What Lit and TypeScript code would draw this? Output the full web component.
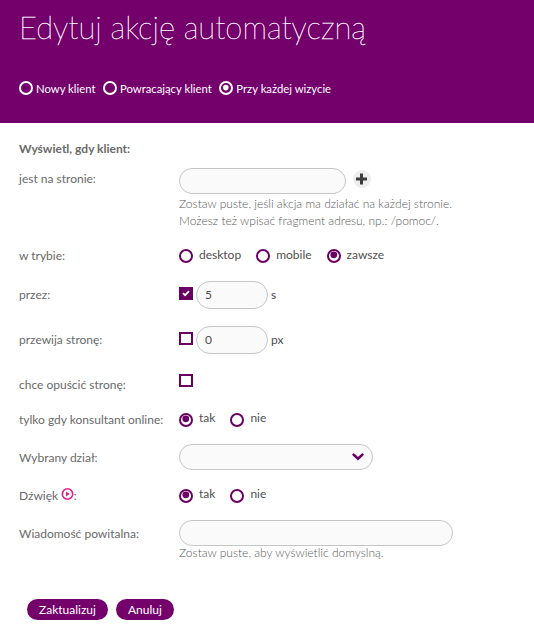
import { LitElement, html, css, nothing } from "lit";
import { customElement, property } from "lit/decorators.js";
import { classMap } from "lit/directives/class-map.js";

@customElement("radio-option")
class RadioOption extends LitElement {
  @property() label = "";
  @property({ type: Boolean }) checked = false;
  @property({ type: Boolean }) light = false;

  static styles = css`
    :host { display: flex; align-items: center; gap: 6px; color: #505050; font-size: 12px; line-height: 20px; }
    :host([light]) { color: #fff; gap: 3px; font-size: 11.3px; }
    .ring { width: 14px; height: 14px; flex: none; display: block; margin-top: var(--ring-drop, 1px); color: #6b0063; }
    .text { margin-top: -1px; white-space: nowrap; }
    :host([light]) .ring { color: #fff; margin-top: -2px; }
    :host([light]) .text { margin-top: 0; }
  `;

  render() {
    return html`
      <svg class="ring" viewBox="0 0 14 14">
        <circle cx="7" cy="7" r="6" fill="none" stroke="currentColor" stroke-width="2" />
        ${this.checked
          ? html`<svg viewBox="0 0 14 14"><circle cx="6.8" cy=${this.light ? 6.6 : 5.8} r=${this.light ? 2.8 : 3.4} fill="currentColor" /></svg>`
          : nothing}
      </svg>
      <span class="text">${this.label}</span>
    `;
  }
}

@customElement("check-box")
class CheckBox extends LitElement {
  @property({ type: Boolean }) checked = false;

  static styles = css`
    :host { display: block; width: 14px; height: 13px; flex: none; }
    .box { box-sizing: border-box; width: 14px; height: 13px; border: 2px solid #6b0063; display: grid; place-items: center; }
    .on { background: #6b0063; }
    .tick { width: 8px; height: 7px; display: block; }
  `;

  render() {
    return html`<div class=${classMap({ box: true, on: this.checked })}>
      ${this.checked
        ? html`<svg class="tick" viewBox="0 0 8 7"><path d="M1 3.2 3.1 5.2 7 1.2" fill="none" stroke="#fff" stroke-width="1.8" /></svg>`
        : nothing}
    </div>`;
  }
}

@customElement("app-root")
class AppRoot extends LitElement {
  static styles = css`
    :host { display: block; height: 630px; background: #fff; color: #6a6a6a; font: 12px/20px Lato, sans-serif; overflow: hidden; }
    .header { box-sizing: border-box; height: 123px; padding: 8px 19px 0; background: #73006b; color: #fff; }
    .title { margin: 0; font-size: 31px; line-height: 38px; font-weight: 200; -webkit-text-stroke: 0.35px #fff; white-space: nowrap; }
    .visits { display: flex; gap: 7.5px; margin-top: 33px; }
    .form { padding: 16px 19px 0; }
    .lead { margin: 0; font-size: 12px; font-weight: 700; line-height: 20px; }
    .rows { display: grid; grid-template-rows: 78px 35px 45px 48px 36px 34px 42px 34px 79px; margin-top: 9px; }
    .row { display: grid; grid-template-columns: 160px 1fr; align-items: start; }
    .label { white-space: nowrap; }
    .first { margin-top: 1px; }
    .line { display: flex; align-items: center; }
    .tall { margin-top: 4px; }
    .exit { margin-top: 1px; }
    .dept { margin-top: 4px; }
    .field { box-sizing: border-box; height: 26px; border: 1px solid #c6c6c6; border-radius: 14px; background: #fafafa; }
    .url { width: 167px; }
    .wide { width: 274px; }
    .num { width: 72px; height: 28px; margin: 0 3px; padding-left: 8px; font-size: 12px; line-height: 26px; color: #4c4c4c; }
    .select { width: 194px; display: flex; align-items: center; justify-content: flex-end; padding-right: 8px; }
    .unit { color: #4c4c4c; line-height: 28px; }
    .plus { width: 18px; height: 18px; margin: -5px 0 0 7px; }
    .hint { margin: 1px 0 0; font-size: 12px; line-height: 17px; font-weight: 300; color: #5a5a5a; white-space: nowrap; }
    .snug { margin-top: -2px; }
    .box { margin-top: -3px; }
    .tri { gap: 15px; }
    .pair { margin-top: -1px; --ring-drop: 3px; }
    .chevron { width: 12px; height: 8px; }
    .play { width: 13px; height: 13px; margin: -2px 0 0 -0.5px; vertical-align: -1px; }
    .actions { display: flex; gap: 8px; padding-left: 8px; }
    .btn { height: 21px; padding: 0 12px; border: 0; border-radius: 11px; background: #73006b; color: #fff; font: 12px/21px Lato, sans-serif; }
  `;

  private yesNo() {
    return html`<div class="line tri pair">
      <radio-option label="tak" checked></radio-option>
      <radio-option label="nie"></radio-option>
    </div>`;
  }

  render() {
    return html`
      <header class="header">
        <h1 class="title">Edytuj akcję automatyczną</h1>
        <div class="visits">
          <radio-option light label="Nowy klient"></radio-option>
          <radio-option light label="Powracający klient"></radio-option>
          <radio-option light checked label="Przy każdej wizycie"></radio-option>
        </div>
      </header>
      <main class="form">
        <h2 class="lead">Wyświetl, gdy klient:</h2>
        <div class="rows">
          <div class="row">
            <span class="label first">jest na stronie:</span>
            <div>
              <div class="line">
                <div class="field url"></div>
                <svg class="plus" viewBox="0 0 18 18">
                  <circle cx="9" cy="9" r="9" fill="#eee" />
                  <path d="M8.5 3.5v11M3 9h11" stroke="#3c3c3c" stroke-width="3" />
                </svg>
              </div>
              <p class="hint">Zostaw puste, jeśli akcja ma działać na każdej stronie.<br />Możesz też wpisać fragment adresu, np.: /pomoc/.</p>
            </div>
          </div>
          <div class="row">
            <span class="label">w trybie:</span>
            <div class="line tri">
              <radio-option label="desktop"></radio-option>
              <radio-option label="mobile"></radio-option>
              <radio-option label="zawsze" checked></radio-option>
            </div>
          </div>
          <div class="row">
            <span class="label tall">przez:</span>
            <div class="line"><check-box class="box" checked></check-box><div class="field num">5</div><span class="unit">s</span></div>
          </div>
          <div class="row">
            <span class="label tall">przewija stronę:</span>
            <div class="line"><check-box class="box"></check-box><div class="field num">0</div><span class="unit">px</span></div>
          </div>
          <div class="row">
            <span class="label exit">chce opuścić stronę:</span>
            <check-box></check-box>
          </div>
          <div class="row">
            <span class="label">tylko gdy konsultant online:</span>
            ${this.yesNo()}
          </div>
          <div class="row">
            <span class="label dept">Wybrany dział:</span>
            <div class="field select">
              <svg class="chevron" viewBox="0 0 12 8"><path d="M1.6 1.6 6 5.8l4.4-4.2" fill="none" stroke="#6b0063" stroke-width="2.6" stroke-linecap="round" /></svg>
            </div>
          </div>
          <div class="row">
            <span class="label">Dźwięk <svg class="play" viewBox="0 0 13 13"><circle cx="6.5" cy="6" r="5.2" fill="none" stroke="#e0218a" stroke-width="1.6" /><path d="M5 3.6 8.8 6 5 8.4z" fill="#e0218a" /></svg>:</span>
            ${this.yesNo()}
          </div>
          <div class="row">
            <span class="label dept">Wiadomość powitalna:</span>
            <div>
              <div class="field wide"></div>
              <p class="hint snug">Zostaw puste, aby wyświetlić domyslną.</p>
            </div>
          </div>
        </div>
        <div class="actions">
          <button class="btn">Zaktualizuj</button>
          <button class="btn">Anuluj</button>
        </div>
      </main>
    `;
  }
}
